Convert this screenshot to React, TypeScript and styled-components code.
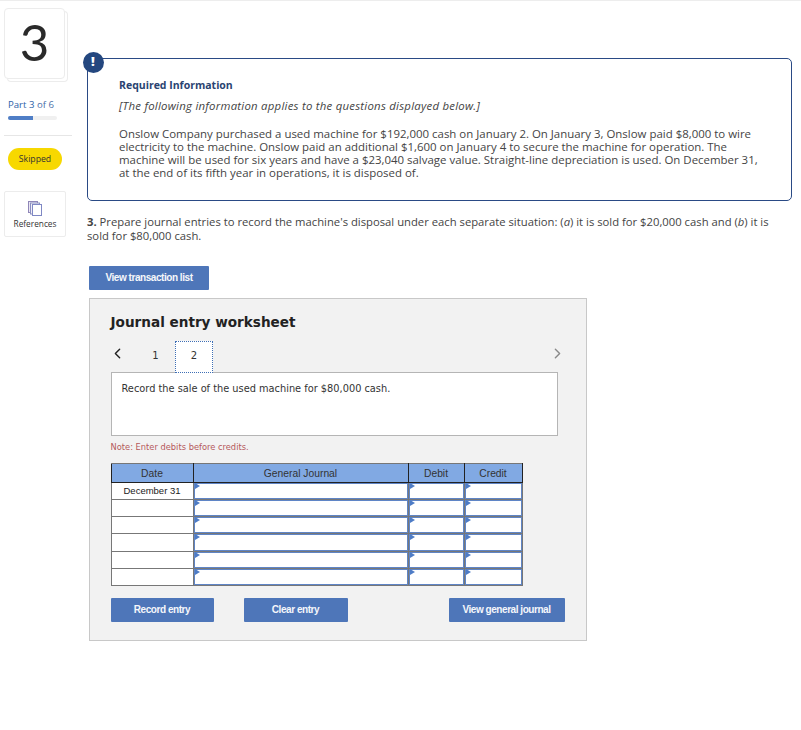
import styled, { createGlobalStyle } from "styled-components";
import { ChevronLeft, ChevronRight } from "lucide-react";

const GlobalStyle = createGlobalStyle`
  html, body {
    margin: 0;
    padding: 0;
    background: #fff;
  }
  body {
    font-family: "Open Sans", "Liberation Sans", sans-serif;
    color: #333;
  }
`;

const RefIcon = () => (
  <svg width="14" height="16" viewBox="0 0 14 16" fill="#fff">
    <rect x="0.5" y="0.5" width="9" height="11" fill="#e9e6f2" stroke="#8f86b8" />
    <rect x="2.5" y="2" width="9" height="11" fill="#f1eef6" stroke="#8a8fc0" />
    <rect x="4.5" y="3.5" width="9" height="11" fill="#fff" stroke="#7f88c4" />
  </svg>
);

const rows = ["December 31", "", "", "", "", ""];

const App = () => {
  return (
    <>
      <GlobalStyle />
      <Page>
        <Sidebar>
          <NumberCard>3</NumberCard>
          <PartLabel>
            Part 3 <span>of 6</span>
          </PartLabel>
          <Progress>
            <ProgressFill style={{ width: `${(3 / 6) * 100}%` }} />
          </Progress>
          <Divider />
          <SkippedPill>Skipped</SkippedPill>
          <RefCard>
            <RefIcon />
            <span>References</span>
          </RefCard>
        </Sidebar>
        <Main>
          <InfoBox>
            <Badge>!</Badge>
            <InfoTitle>Required Information</InfoTitle>
            <InfoNote>[The following information applies to the questions displayed below.]</InfoNote>
            <InfoBody>
              Onslow Company purchased a used machine for $192,000 cash on January 2. On January 3, Onslow paid $8,000 to wire
              <br />
              electricity to the machine. Onslow paid an additional $1,600 on January 4 to secure the machine for operation. The
              <br />
              machine will be used for six years and have a $23,040 salvage value. Straight-line depreciation is used. On December 31,
              <br />
              at the end of its fifth year in operations, it is disposed of.
            </InfoBody>
          </InfoBox>
          <Question>
            <b>3.</b> Prepare journal entries to record the machine's disposal under each separate situation: (<i>a</i>) it is sold for $20,000 cash and (<i>b</i>) it is
            <br />
            sold for $80,000 cash.
          </Question>
          <Indented>
            <ActionButton $width={120}>View transaction list</ActionButton>
            <Worksheet>
              <WorksheetTitle>Journal entry worksheet</WorksheetTitle>
              <TabRow>
                <PrevArrow>
                  <ChevronLeft size={17} color="#222" strokeWidth={2} />
                </PrevArrow>
                <Tab>1</Tab>
                <Tab $active>2</Tab>
                <NextArrow>
                  <ChevronRight size={17} color="#8a8a8a" strokeWidth={2} />
                </NextArrow>
              </TabRow>
              <RecordBox>Record the sale of the used machine for $80,000 cash.</RecordBox>
              <Note>Note: Enter debits before credits.</Note>
              <Journal>
                <colgroup>
                  <col style={{ width: 82 }} />
                  <col style={{ width: 215 }} />
                  <col style={{ width: 56 }} />
                  <col style={{ width: 58 }} />
                </colgroup>
                <thead>
                  <tr>
                    <HeadCell>Date</HeadCell>
                    <HeadCell>General Journal</HeadCell>
                    <HeadCell>Debit</HeadCell>
                    <HeadCell>Credit</HeadCell>
                  </tr>
                </thead>
                <tbody>
                  {rows.map((date, i) => (
                    <tr key={i}>
                      <DateCell>{date}</DateCell>
                      <InputCell />
                      <InputCell />
                      <InputCell />
                    </tr>
                  ))}
                </tbody>
              </Journal>
              <ButtonRow>
                <ActionButton $width={103}>Record entry</ActionButton>
                <ActionButton $width={104}>Clear entry</ActionButton>
                <ActionButton $width={116} $push>View general journal</ActionButton>
              </ButtonRow>
            </Worksheet>
          </Indented>
        </Main>
      </Page>
    </>
  );
};
export default App;

const Page = styled.div`
  display: flex;
  width: 801px;
  height: 730px;
  box-sizing: border-box;
  border-top: 1px solid #ededed;
  overflow: hidden;
`;

const Sidebar = styled.aside`
  width: 87px;
  flex-shrink: 0;
  padding: 7px 0 0 4px;
  box-sizing: border-box;
`;

const NumberCard = styled.div`
  width: 61px;
  height: 71px;
  box-sizing: border-box;
  border: 1px solid #ececec;
  border-radius: 4px;
  background: #fff;
  box-shadow: 3px 3px 0 -1px #fff, 3px 3px 0 0 #ececec;
  font-family: "Lato", sans-serif;
  font-size: 51px;
  font-weight: 400;
  line-height: 65px;
  text-align: center;
  color: #2a2a2a;
`;

const PartLabel = styled.div`
  margin: 19px 0 0 4px;
  font-size: 9.6px;
  line-height: 14px;
  color: #2e62a8;

  span {
    color: #4a6fa8;
  }
`;

const Progress = styled.div`
  width: 49px;
  height: 4px;
  margin: 4px 0 0 4px;
  border-radius: 2px;
  background: #f0f0f0;
  overflow: hidden;
`;

const ProgressFill = styled.div`
  height: 100%;
  background: #4f7ec6;
`;

const Divider = styled.div`
  width: 68px;
  height: 1px;
  margin-top: 15px;
  background: #e6e6e6;
`;

const SkippedPill = styled.div`
  width: 54px;
  height: 22px;
  margin: 12px 0 0 4px;
  border-radius: 11px;
  background: #f7d800;
  color: #333;
  font-size: 8.7px;
  line-height: 22px;
  text-align: center;
`;

const RefCard = styled.div`
  width: 62px;
  height: 46px;
  margin-top: 21px;
  box-sizing: border-box;
  border: 1px solid #ececec;
  border-radius: 2px;
  display: flex;
  flex-direction: column;
  align-items: center;
  padding-top: 9px;
  gap: 1px;
  font-size: 8.3px;
  color: #333;
`;

const Main = styled.main`
  flex: 1;
  min-width: 0;
`;

const InfoBox = styled.section`
  position: relative;
  width: 705px;
  height: 143px;
  margin-top: 57px;
  box-sizing: border-box;
  border: 1.5px solid #2a4a85;
  border-radius: 5px;
  padding: 19px 30px 0 31px;
`;

const Badge = styled.div`
  position: absolute;
  top: -7px;
  left: -5.5px;
  width: 21px;
  height: 21px;
  border-radius: 50%;
  background: #24477f;
  color: #fff;
  font-size: 13px;
  font-weight: 800;
  line-height: 19px;
  text-align: center;
`;

const InfoTitle = styled.div`
  font-size: 10.5px;
  font-weight: 700;
  line-height: 14px;
  color: #2a4371;
`;

const InfoNote = styled.div`
  margin-top: 7px;
  font-size: 11.4px;
  font-style: italic;
  letter-spacing: 0.24px;
  line-height: 14px;
  color: #444;
`;

const InfoBody = styled.p`
  margin: 14px 0 0;
  font-size: 11.45px;
  line-height: 13px;
  color: #444;
  white-space: nowrap;
`;

const Question = styled.p`
  margin: 14px 0 0;
  font-size: 11.27px;
  line-height: 14px;
  color: #444;
  white-space: nowrap;
`;

const Indented = styled.div`
  margin: 23px 0 0 2px;
`;

const ActionButton = styled.div<{ $width: number; $push?: boolean }>`
  width: ${(p) => p.$width}px;
  height: 24px;
  margin-left: ${(p) => (p.$push ? "auto" : "0")};
  border-radius: 1px;
  background: #4e76b9;
  color: #f5f7fb;
  font-family: "Liberation Sans", sans-serif;
  font-size: 10px;
  font-weight: 700;
  letter-spacing: -0.45px;
  line-height: 23px;
  text-align: center;
`;

const Worksheet = styled.section`
  width: 498px;
  height: 343px;
  margin-top: 8px;
  box-sizing: border-box;
  border: 1.5px solid #c8c8c8;
  background: #f2f2f2;
  padding: 14px 20px 0 20.5px;
`;

const WorksheetTitle = styled.h2`
  margin: 0;
  font-family: "DejaVu Sans", sans-serif;
  font-size: 13.6px;
  font-weight: 700;
  line-height: 18px;
  color: #222;
`;

const TabRow = styled.div`
  display: flex;
  align-items: center;
  height: 32px;
  margin-top: 10px;
  position: relative;
  z-index: 1;
`;

const PrevArrow = styled.div`
  display: flex;
  margin: 0 0 8px -2px;
`;

const Tab = styled.div<{ $active?: boolean }>`
  width: 38px;
  height: 32px;
  box-sizing: border-box;
  margin-left: ${(p) => (p.$active ? "0" : "11px")};
  padding-left: ${(p) => (p.$active ? "1px" : "0")};
  border: ${(p) => (p.$active ? "1px dotted #3f6fb5" : "1px solid transparent")};
  background: ${(p) => (p.$active ? "#fff" : "transparent")};
  font-family: "DejaVu Sans", sans-serif;
  font-size: 10px;
  line-height: 27px;
  text-align: center;
  color: #333;
`;

const NextArrow = styled.div`
  display: flex;
  margin: 0 0 8px auto;
`;

const RecordBox = styled.div`
  width: 447px;
  height: 64px;
  margin-top: -1px;
  box-sizing: border-box;
  border: 1px solid #b5b5b5;
  background: #fff;
  padding: 9px 10px;
  font-family: "DejaVu Sans", sans-serif;
  font-size: 9.8px;
  line-height: 13px;
  color: #333;
`;

const Note = styled.div`
  margin-top: 5px;
  font-family: "DejaVu Sans", sans-serif;
  font-size: 8.3px;
  line-height: 12px;
  color: #b5595b;
`;

const Journal = styled.table`
  width: 411px;
  margin-top: 10px;
  table-layout: fixed;
  border-collapse: collapse;
  background: #fff;
  font-family: "Liberation Sans", sans-serif;
  font-size: 9.5px;

  tbody tr:nth-child(4) td {
    height: 18px;
  }
`;

const HeadCell = styled.th`
  height: 19px;
  padding: 0;
  box-sizing: border-box;
  border: 1px solid #222;
  border-top-color: #777;
  background: #81a9e3;
  font-size: 10.3px;
  font-weight: 400;
  color: #333;
  text-align: center;
`;

const DateCell = styled.td`
  height: 17px;
  padding: 0 0 2px;
  box-sizing: border-box;
  border: 1px solid #777;
  text-align: center;
  color: #222;
`;

const InputCell = styled.td`
  position: relative;
  height: 17px;
  padding: 0;
  box-sizing: border-box;
  border: 1px solid #777;
  box-shadow: inset 0 0 0 1px #5f85c6;

  &::before {
    content: "";
    position: absolute;
    top: 0;
    left: 1px;
    border-left: 5px solid #4e7cc6;
    border-top: 3px solid transparent;
    border-bottom: 3px solid transparent;
  }
`;

const ButtonRow = styled.div`
  display: flex;
  width: 454px;
  gap: 30px;
  margin-top: 12px;
`;
